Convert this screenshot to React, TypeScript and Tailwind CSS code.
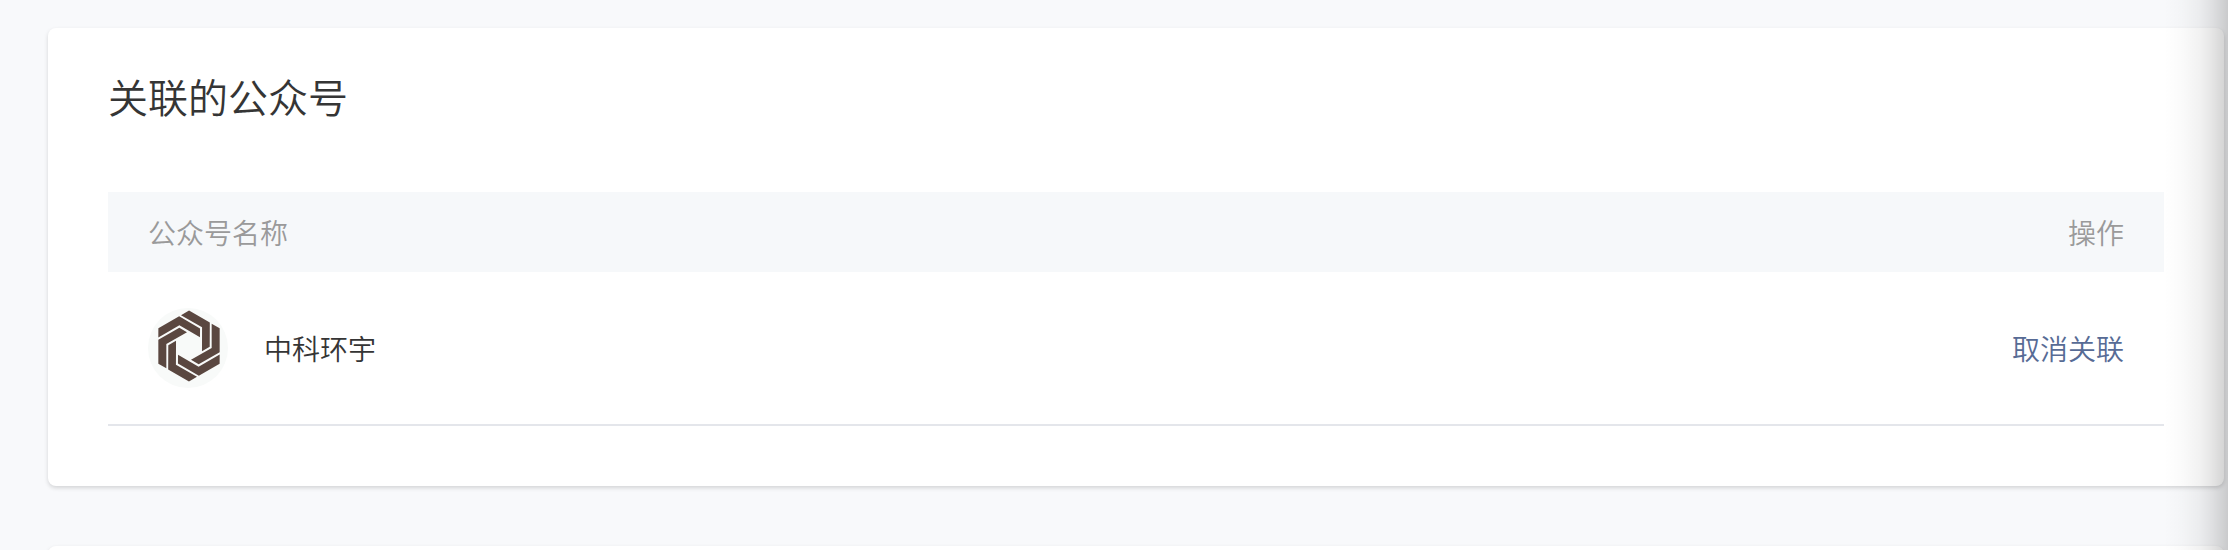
const accounts = [{ name: "中科环宇" }];

const arms = [0, 60, 120, 180, 240, 300];

function Logo() {
  return (
    <svg
      viewBox="0 0 240 240"
      className="size-20 shrink-0"
      aria-hidden="true"
    >
      <circle cx="120" cy="120" r="120" fill="#f8faf9" />
      <g transform="translate(123 114)" fill="#5a4740">
        {arms.map((angle) => (
          <path
            key={angle}
            d="M-92 -19L-29 -55L-6 -41.5L-68 -6V67L-92 53Z"
            transform={`rotate(${angle})`}
          />
        ))}
      </g>
    </svg>
  );
}

export default function App() {
  return (
    <div className="relative h-screen overflow-hidden bg-[#f8f9fb] pt-7 pr-1 pl-12 font-['Noto_Sans_CJK_SC',sans-serif] font-[350] text-[#353535]">
      <main className="space-y-15">
        <section className="rounded-lg bg-white px-15 pt-10 pb-15 shadow-[0_2px_4px_rgba(0,0,0,0.15)]">
          <h1 className="mb-17 text-[40px] leading-14">关联的公众号</h1>
          <table className="w-full text-[28px] leading-10">
            <thead>
              <tr className="bg-[#f6f8fa] text-[#9a9a9a]">
                <th className="px-10 py-5 text-left font-[350]">公众号名称</th>
                <th className="px-10 py-5 text-right font-[350]">操作</th>
              </tr>
            </thead>
            <tbody>
              {accounts.map((account) => (
                <tr key={account.name} className="border-b-2 border-[#e4e6eb]">
                  <td className="px-10 py-9">
                    <div className="flex items-center gap-9">
                      <Logo />
                      {account.name}
                    </div>
                  </td>
                  <td className="px-10 py-9 text-right">
                    <a href="#unlink" className="text-[#576b95]">
                      取消关联
                    </a>
                  </td>
                </tr>
              ))}
            </tbody>
          </table>
        </section>
        <section className="h-40 rounded-lg bg-white shadow-[0_2px_4px_rgba(0,0,0,0.15)]" />
      </main>
      <div className="pointer-events-none absolute inset-y-0 right-0 w-16 bg-[linear-gradient(to_right,rgba(0,0,0,0),rgba(0,0,0,0.02)_30%,rgba(0,0,0,0.05)_55%,rgba(0,0,0,0.1)_75%,rgba(0,0,0,0.19))]" />
    </div>
  );
}
